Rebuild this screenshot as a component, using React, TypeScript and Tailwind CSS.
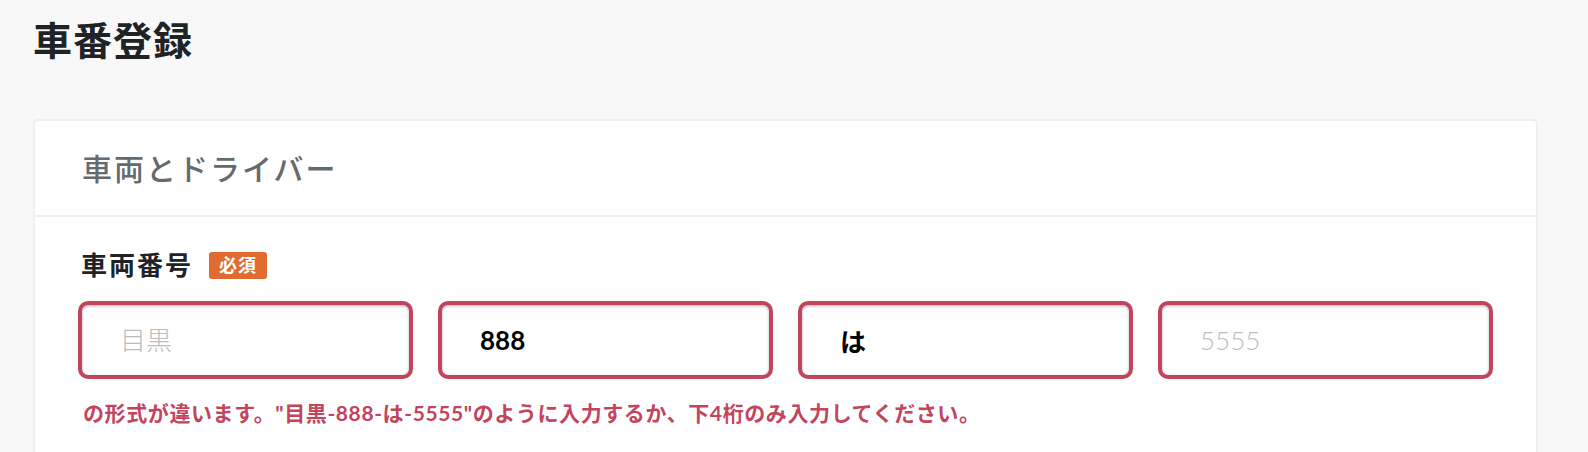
const fieldClass =
  "h-[78px] w-full rounded-[10px] border-4 border-[#c3445d] bg-white pl-[38px] pr-4 text-[26px] text-black outline-none placeholder:text-[#bdbdbd] placeholder:font-light shadow-[inset_0_1px_3px_rgba(0,0,0,0.3)]";

export default function App() {
  return (
    <div className="min-h-screen bg-[#f8f8f8] font-['Lato','Noto_Sans_CJK_JP',sans-serif] text-[#1f2326]">
      <div className="pl-[33px] pr-[50px] pt-[13px]">
        <h1 className="text-[39px] font-bold leading-[54px] tracking-[1px]">車番登録</h1>

        <div className="mt-[52px] rounded-[5px] border-2 border-[#efefef] bg-white">
          <div className="border-b-2 border-[#efefef] px-[47px] py-[26px]">
            <h2 className="text-[30px] font-medium leading-[42px] tracking-[2px] text-[#656b6d]">
              車両とドライバー
            </h2>
          </div>

          <div className="px-[43px] pt-[30px] pb-8">
            <div className="flex items-center gap-[16px] pl-[3px]">
              <span className="text-[26px] font-bold leading-[36px] tracking-[2px]">車両番号</span>
              <span className="rounded-[3px] bg-[#e06b30] px-[10px] text-[18px] font-bold leading-[27px] tracking-[1px] text-white">
                必須
              </span>
            </div>

            <div className="mt-[18px] grid grid-cols-4 gap-[25px]">
              <input className={fieldClass} placeholder="目黒" defaultValue="" />
              <input className={`${fieldClass} font-bold`} placeholder="888" defaultValue="888" />
              <input className={`${fieldClass} font-bold`} placeholder="は" defaultValue="は" />
              <input className={fieldClass} placeholder="5555" defaultValue="" />
            </div>

            <p className="mt-[20px] pl-[5px] text-[21px] font-bold leading-[28px] tracking-[0.6px] text-[#c3445d]">
              の形式が違います。"目黒-888-は-5555"のように入力するか、下4桁のみ入力してください。
            </p>
          </div>
        </div>
      </div>
    </div>
  );
}
